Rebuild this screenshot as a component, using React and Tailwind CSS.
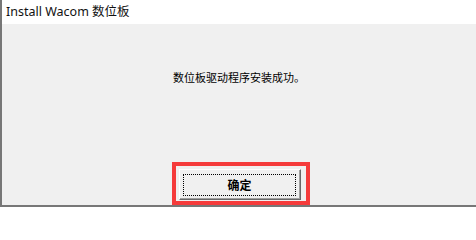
export default function App() {
  return (
    <div className="h-[208px] w-[476px] overflow-hidden bg-white">
      <div className="flex h-[207px] w-[476px] flex-col border-b-2 border-l-2 border-[#777777]">
        {/* title bar */}
        <div className="flex h-[24px] shrink-0 items-center bg-white pl-[4px] font-['Noto_Sans','Noto_Sans_CJK_SC',sans-serif] text-[12.5px] text-[#111111]">
          Install Wacom 数位板
        </div>

        {/* dialog body */}
        <div className="flex flex-1 flex-col items-center bg-[#f0f0f0] font-['Noto_Sans_CJK_SC',sans-serif]">
          <p className="mt-[46px] text-[11px] leading-[14px] text-black">数位板驱动程序安装成功。</p>

          <div className="ml-[4px] mt-[78px] border-4 border-[#f53b3b] pb-[1px] pl-[3px] pr-[5px] pt-[3px]">
            <div className="h-[31px] w-[122px] border-b border-l border-r border-t border-b-[#696969] border-l-white border-r-[#696969] border-t-white">
              <div className="flex h-full w-full border-b border-r border-[#a0a0a0] pb-[2px] pl-[3px] pr-[3px] pt-[4px]">
                <div className="flex flex-1 items-center justify-center border border-dotted border-black text-[12px] font-bold text-black">
                  确定
                </div>
              </div>
            </div>
          </div>
        </div>
      </div>
    </div>
  );
}
